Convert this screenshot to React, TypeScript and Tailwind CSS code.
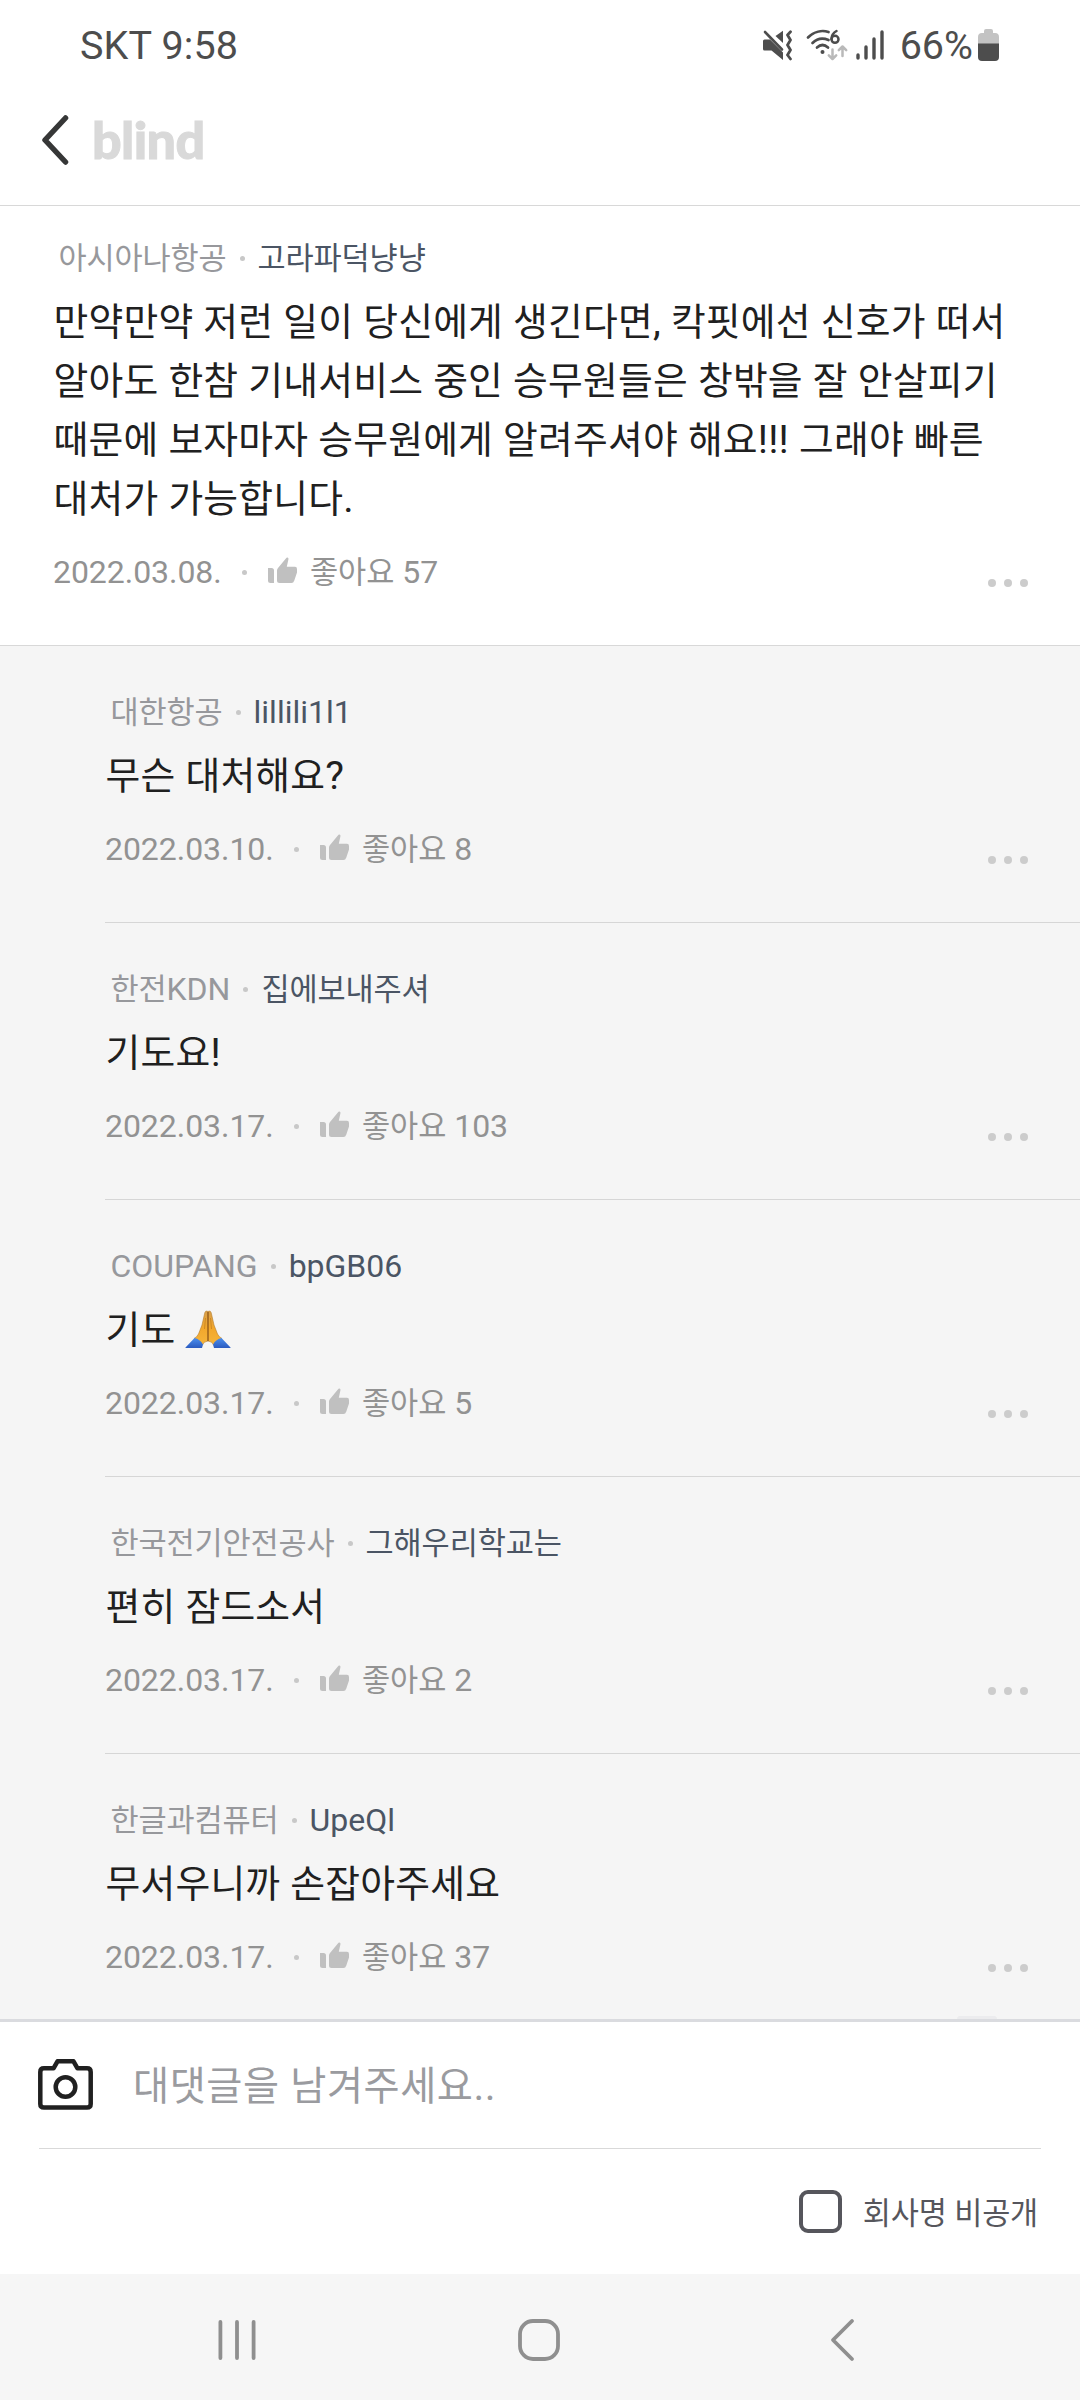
interface Comment {
    company: string;
    author: string;
    lines: string[];
    date: string;
    likes: number;
    pray?: boolean;
}

const post: Comment = {
    company: "아시아나항공",
    author: "고라파덕냥냥",
    lines: [
        "만약만약 저런 일이 당신에게 생긴다면, 칵핏에선 신호가 떠서",
        "알아도 한참 기내서비스 중인 승무원들은 창밖을 잘 안살피기",
        "때문에 보자마자 승무원에게 알려주셔야 해요!!! 그래야 빠른",
        "대처가 가능합니다.",
    ],
    date: "2022.03.08.",
    likes: 57,
};

const replies: Comment[] = [
    { company: "대한항공", author: "lillili1l1", lines: ["무슨 대처해요?"], date: "2022.03.10.", likes: 8 },
    { company: "한전KDN", author: "집에보내주셔", lines: ["기도요!"], date: "2022.03.17.", likes: 103 },
    { company: "COUPANG", author: "bpGB06", lines: ["기도 "], date: "2022.03.17.", likes: 5, pray: true },
    { company: "한국전기안전공사", author: "그해우리학교는", lines: ["편히 잠드소서"], date: "2022.03.17.", likes: 2 },
    { company: "한글과컴퓨터", author: "UpeQl", lines: ["무서우니까 손잡아주세요"], date: "2022.03.17.", likes: 37 },
];

interface MixedProps {
    text: string;
    hangul?: string;
}

// Hangul is set a touch smaller than the latin text around it
const Mixed = ({ text, hangul = "text-[0.957em]" }: MixedProps) => (
    <>
        {text.split(/([가-힣]+)/).map((part, i) =>
            /[가-힣]/.test(part) ? (
                <span key={i} className={hangul}>{part}</span>
            ) : (
                part
            )
        )}
    </>
);

const MuteIcon = () => (
    <svg className="w-[31px] h-[31px]" viewBox="0 0 31 31" fill="none">
        <path d="M2.500 9.500H8L21 22.500V30L9.500 20.500H2.500Q1 20.500 1 19V11Q1 9.500 2.500 9.500Z" fill="#4d4d4d" />
        <path d="M13.500 6 21 .8V13Z" fill="#4d4d4d" />
        <path d="M3 2 20 19.500" stroke="#4d4d4d" strokeWidth="2.600" strokeLinecap="round" />
        <path d="M28.500 1.800 25.500 5 28.500 10 25.500 15 28.500 20 25.500 25 28.500 29" stroke="#4d4d4d" strokeWidth="2.800" strokeLinecap="round" strokeLinejoin="round" />
    </svg>
);

const WifiIcon = () => (
    <svg className="w-[42px] h-[32px]" viewBox="0 0 42 32" fill="none">
        <g stroke="#4d4d4d" strokeWidth="2.700" strokeLinecap="round">
            <path d="M2 8.500C8 2.500 16 1 22.500 3" />
            <path d="M6.500 14c4.500-4.500 10-5.500 16-3" />
            <path d="M11 18.500c3.500-3.200 7.500-3.200 11 0" />
            <path d="M30.500 2c-3.500 2-5 5-5 8" strokeWidth="2.500" />
            <circle cx="29" cy="10.300" r="3.500" strokeWidth="2.500" />
        </g>
        <circle cx="16.500" cy="23" r="2" fill="#4d4d4d" />
        <g stroke="#b9b9b9" strokeWidth="2.500" strokeLinecap="round" strokeLinejoin="round">
            <path d="M26.500 20.500v9M22.800 26.300l3.700 3.700 3.700-3.700" />
            <path d="M36.500 27v-9M32.800 21.200l3.700-3.700 3.700 3.700" />
        </g>
    </svg>
);

const SignalIcon = () => (
    <svg className="w-[28px] h-[30px]" viewBox="0 0 28 30" stroke="#4d4d4d" strokeWidth="3.400" strokeLinecap="round">
        <path d="M2 25v3M10 17v11M18 9v19M26 2v26" />
    </svg>
);

const BatteryIcon = () => (
    <svg className="w-[21px] h-[33px]" viewBox="0 0 21 33">
        <path d="M6 2q0-2 2-2h5q2 0 2 2v2h2q4 0 4 4v7H0V8q0-4 4-4h2Z" fill="#c3c3c3" />
        <path d="M0 14.500h21V28q0 4-4 4H4q-4 0-4-4Z" fill="#4d4d4d" />
    </svg>
);

const ThumbIcon = () => (
    <svg className="w-[29px] h-[27px]" viewBox="0 0 29 27" fill="#c0c0c0">
        <path d="M0 11h3.500Q6 11 6 13.500V26H2.500Q0 26 0 23.500Z" />
        <path d="M9 13.500Q9 12 10 11L18.500.8Q20.500-.3 20.500 2L18.800 9.800H27Q29 9.800 29 12v3.500L26.300 23.500Q25.500 26 23.500 26H11.500Q9 26 9 23.500Z" />
    </svg>
);

const PrayIcon = () => (
    <svg className="w-[46px] h-[39px]" viewBox="0 0 46 39">
        <defs>
            <linearGradient id="hand" x1="0" y1="0" x2="0" y2="1">
                <stop offset="0" stopColor="#d9a04a" />
                <stop offset="0.500" stopColor="#f2a72c" />
                <stop offset="1" stopColor="#f5b53c" />
            </linearGradient>
            <linearGradient id="sleeve" x1="0" y1="0" x2="0" y2="1">
                <stop offset="0" stopColor="#4b8fee" />
                <stop offset="1" stopColor="#2b5bc0" />
            </linearGradient>
        </defs>
        <path d="M23 1.500Q20 0 19.500 4L17 15 13.500 24Q12 27 9 28.500L17.500 35Q18.500 31.500 23 31Q27.500 31.500 28.500 35L37 28.500Q34 27 32.500 24L29 15 26.500 4Q26 0 23 1.500Z" fill="url(#hand)" stroke="#b67c2c" strokeWidth="0.600" />
        <path d="M23 2v29" stroke="#8d5518" strokeWidth="1.300" />
        <path d="M20.500 8 19.500 19M25.500 8l1 11" stroke="#c78220" strokeWidth="0.800" />
        <path d="M.5 37.500 9.500 28Q15 29 18 34.500L17 38H1Q0 38 .5 37.500Z" fill="url(#sleeve)" />
        <path d="M45.500 37.500 36.500 28Q31 29 28 34.500L29 38H45Q46 38 45.500 37.500Z" fill="url(#sleeve)" />
    </svg>
);

const CommentBody = ({ comment }: { comment: Comment }) => (
    <div className="flex flex-col">
        <div className="flex items-center h-10 pl-[5.500px] text-[32px] leading-10 whitespace-pre">
            <span className="text-[#97989c]"><Mixed text={comment.company} hangul="text-[0.957em] tracking-[-0.15px]" /></span>
            <span className="size-[5px] rounded-full bg-[#c8c8c8] mx-[13px]" />
            <span className="text-[#4b5564]"><Mixed text={comment.author} hangul="text-[0.957em] tracking-[-0.15px]" /></span>
        </div>
        <div className="mt-[14px] pl-[0.500px] text-[39.500px] leading-[59px] tracking-[0.19px] text-[#202020] whitespace-pre">
            {comment.lines.map((line) => (
                <p key={line} className="h-[59px] flex items-center">
                    <span><Mixed text={line} /></span>
                    {comment.pray && <PrayIcon />}
                </p>
            ))}
        </div>
        <div className="mt-[24px] flex items-center h-10 text-[32px] leading-10 tracking-[-0.05px] text-[#929292] whitespace-pre">
            <span className="w-[170px]">{comment.date}</span>
            <span className="size-[5px] rounded-full bg-[#c8c8c8] ml-[19px] mr-[21px]" />
            <span className="-mt-1"><ThumbIcon /></span>
            <span className="ml-[13px]"><Mixed text={`좋아요 ${comment.likes}`} /></span>
        </div>
        <div className="flex justify-end gap-2 mr-[52px] -mt-[13px]">
            <span className="size-2 rounded-full bg-[#cccccc]" />
            <span className="size-2 rounded-full bg-[#cccccc]" />
            <span className="size-2 rounded-full bg-[#cccccc]" />
        </div>
    </div>
);

const StatusBar = () => (
    <div className="h-[90px] pt-[2px] pl-20 pr-[81px] flex items-center justify-between text-[39.500px] text-[#4d4d4d]">
        <span className="tracking-[0.15px]">SKT 9:58</span>
        <div className="flex items-center">
            <span className="-mt-[2px]"><MuteIcon /></span>
            <span className="ml-[13px] -mt-[2px]"><WifiIcon /></span>
            <span className="ml-[8px] -mt-[2px]"><SignalIcon /></span>
            <span className="ml-[16px]">66%</span>
            <span className="ml-[5px] -mt-[2px]"><BatteryIcon /></span>
        </div>
    </div>
);

const Header = () => (
    <header className="h-[116px] pb-4 pl-[42px] flex items-center border-b border-[#d8d8d8]">
        <svg className="w-[27px] h-[50px]" viewBox="0 0 27 50" fill="none" stroke="#363737" strokeWidth="5.500" strokeLinecap="round" strokeLinejoin="round">
            <path d="M23.500 3 3 25l20.500 22" />
        </svg>
        <span className="ml-[23px] -mt-px font-['Lato'] font-black text-[52px] leading-[60px] tracking-[-0.6px] text-[#d9d9d9] [-webkit-text-stroke:1px_#d9d9d9]">blind</span>
    </header>
);

const Composer = () => (
    <div className="relative h-[255px] bg-white border-t-[3px] border-[#dadbdf] flex flex-col">
        {/* tip of the scroll button's shadow showing above the bar */}
        <span className="absolute -top-[6px] right-[83px] w-10 h-[3px] rounded-t-full bg-[#ececee]" />
        <div className="h-[127px] mx-[39px] flex items-center border-b border-[#d9d9d9]">
            <svg className="w-[55px] h-[51px] -ml-px -mt-px" viewBox="0 0 55 51" fill="none" stroke="#202020" strokeWidth="4.500" strokeLinejoin="round">
                <path d="M6 9.300H15.500L19.500 2.300H35.500L39.500 9.300H49Q52.700 9.300 52.700 13V45Q52.700 48.500 49 48.500H6Q2.300 48.500 2.300 45V13Q2.300 9.300 6 9.300Z" />
                <circle cx="27.500" cy="28" r="9.800" />
            </svg>
            <span className="ml-[40px] mt-[3px] text-[41px] leading-[60px] tracking-[0.55px] text-[#9a9b9f] whitespace-pre"><Mixed text="대댓글을 남겨주세요.." /></span>
        </div>
        <label className="flex-1 flex items-center justify-end pr-[42px] text-[32px] tracking-[-0.25px] text-[#56565c] whitespace-pre">
            <span className="size-[43px] rounded-[9px] border-[4px] border-[#56565c] mr-[21px]" />
            <span className="mt-[2px]"><Mixed text="회사명 비공개" /></span>
        </label>
    </div>
);

const NavBar = () => (
    <nav className="h-[126px] pt-[5px] bg-[#f6f6f6] flex items-center">
        <svg className="ml-[218px] w-[38px] h-[42px]" viewBox="0 0 38 42" stroke="#8f8f8f" strokeWidth="3.800" strokeLinecap="round">
            <path d="M2.400 3v36M19 3v36M35.600 3v36" />
        </svg>
        <svg className="ml-[262px] w-[42px] h-[42px]" viewBox="0 0 42 42" fill="none" stroke="#8f8f8f" strokeWidth="3.800">
            <rect x="2" y="2" width="38" height="38" rx="13" />
        </svg>
        <svg className="ml-[270px] w-[25px] h-[44px]" viewBox="0 0 25 44" fill="none" stroke="#8f8f8f" strokeWidth="3.800" strokeLinecap="round" strokeLinejoin="round">
            <path d="M22 3 3 22l19 19" />
        </svg>
    </nav>
);

export default function App() {
    return (
        <div className="w-[1080px] h-[2400px] overflow-hidden flex flex-col bg-white font-['Roboto','Noto_Sans_CJK_KR',sans-serif]">
            <StatusBar />
            <Header />
            <section className="h-[440px] shrink-0 pt-[32px] pl-[53px] border-b border-[#d8d8d8]">
                <CommentBody comment={post} />
            </section>
            <section className="h-[1373px] shrink-0 overflow-hidden bg-[#f5f5f5] pl-[105px]">
                {replies.map((reply) => (
                    <article key={reply.date + reply.author} className="h-[277px] pt-[46px] border-b border-[#d6d6d6]">
                        <CommentBody comment={reply} />
                    </article>
                ))}
            </section>
            <Composer />
            <NavBar />
        </div>
    );
}
